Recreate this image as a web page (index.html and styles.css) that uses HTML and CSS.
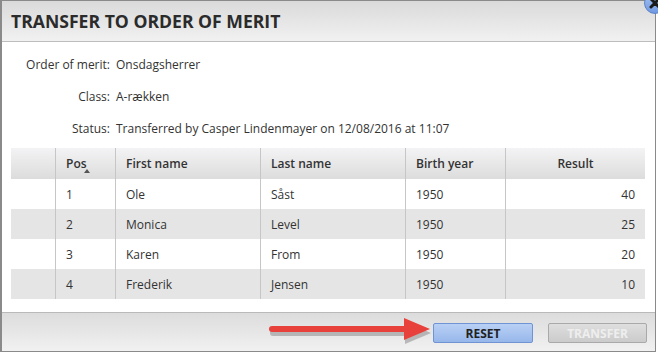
FILE: index.html
```html
<!DOCTYPE html>
<html lang="da">

<head>
    <meta charset="UTF-8">
    <meta name="viewport" content="width=device-width, initial-scale=1.0">
    <title>Transfer to order of merit</title>
    <link rel="stylesheet" href="styles.css">
</head>

<body>
    <div class="dialog">
        <div class="dialog-header">
            <h2>TRANSFER TO ORDER OF MERIT</h2>
        </div>
        <button class="close-btn" title="Close">
            <svg width="12" height="12" viewBox="0 0 12 12">
                <path d="M2 2 L10 10 M10 2 L2 10" stroke="#1a1a1a" stroke-width="3" stroke-linecap="round" />
            </svg>
        </button>

        <div class="dialog-body">
            <div class="info">
                <span class="info-label">Order of merit:</span>
                <span>Onsdagsherrer</span>
                <span class="info-label">Class:</span>
                <span>A-rækken</span>
                <span class="info-label">Status:</span>
                <span>Transferred by Casper Lindenmayer on 12/08/2016 at 11:07</span>
            </div>

            <table class="results">
                <thead>
                    <tr>
                        <th class="col-sel"></th>
                        <th class="col-pos sorted">Pos</th>
                        <th class="col-first">First name</th>
                        <th class="col-last">Last name</th>
                        <th class="col-year">Birth year</th>
                        <th class="col-result">Result</th>
                    </tr>
                </thead>
                <tbody>
                    <tr>
                        <td></td>
                        <td>1</td>
                        <td>Ole</td>
                        <td>Såst</td>
                        <td>1950</td>
                        <td class="num">40</td>
                    </tr>
                    <tr>
                        <td></td>
                        <td>2</td>
                        <td>Monica</td>
                        <td>Level</td>
                        <td>1950</td>
                        <td class="num">25</td>
                    </tr>
                    <tr>
                        <td></td>
                        <td>3</td>
                        <td>Karen</td>
                        <td>From</td>
                        <td>1950</td>
                        <td class="num">20</td>
                    </tr>
                    <tr>
                        <td></td>
                        <td>4</td>
                        <td>Frederik</td>
                        <td>Jensen</td>
                        <td>1950</td>
                        <td class="num">10</td>
                    </tr>
                </tbody>
            </table>
        </div>

        <div class="dialog-footer">
            <svg class="arrow" width="170" height="30" viewBox="0 0 170 30">
                <g transform="translate(1,2)" fill="#7a7a7a" opacity="0.45">
                    <path d="M4 14 L140 14" stroke="#7a7a7a" stroke-width="6" stroke-linecap="round" />
                    <polygon points="136,3 162,14 136,25" />
                </g>
                <path d="M4 12 L140 12" stroke="#e8413c" stroke-width="6" stroke-linecap="round" />
                <polygon points="136,1 162,12 136,23" fill="#e8413c" />
            </svg>
            <button class="btn btn-primary">RESET</button>
            <button class="btn btn-disabled" disabled>TRANSFER</button>
        </div>
    </div>
</body>

</html>
```

FILE: styles.css
```css
body {
    margin: 0;
    font-family: "Open Sans", "Liberation Sans", sans-serif;
    font-size: 12px;
    color: #333;
    background-color: #fff;
    overflow: hidden;
}

.dialog {
    position: relative;
    width: 653px;
    height: 350px;
    border: 1px solid #8a8a8a;
    border-left-width: 2px;
    background-color: #fff;
    display: flex;
    flex-direction: column;
}

.dialog-header {
    height: 40px;
    border-bottom: 1px solid #bdbdbd;
    background: linear-gradient(#dadada, #f1f1f1);
    display: flex;
    align-items: center;
    padding-left: 9px;
}

.dialog-header h2 {
    margin: 0;
    font-size: 17.6px;
    font-weight: 700;
    color: #2b2b2b;
}

.close-btn {
    position: absolute;
    top: -9px;
    right: -11px;
    width: 22px;
    height: 22px;
    padding: 0;
    border: 1px solid #5b82c9;
    border-radius: 50%;
    background: linear-gradient(#a9c6f4, #6f98e2);
    display: flex;
    align-items: center;
    justify-content: center;
}

.dialog-body {
    flex: 1;
    padding: 6px 10px 0 9px;
}

.info {
    display: grid;
    grid-template-columns: 99px auto;
    column-gap: 6px;
    grid-auto-rows: 32px;
    align-items: center;
    margin-bottom: 4px;
}

.info-label {
    text-align: right;
}

.results {
    width: 634px;
    border-collapse: collapse;
}

.results th,
.results td {
    height: 30px;
    padding: 0 10px;
    text-align: left;
    border-left: 1px solid #c6c6c6;
}

.results th:first-child,
.results td:first-child {
    border-left: none;
}

.results th {
    font-weight: 600;
    background: linear-gradient(#f3f3f5, #dcdcdc);
    height: 31px;
}

.results th.col-result {
    text-align: center;
}

.results tbody tr:nth-child(even) {
    background-color: #e5e5e5;
}

.results td.num {
    text-align: right;
}

.col-sel {
    width: 24px;
}

.col-pos {
    width: 39px;
}

.col-first {
    width: 124px;
}

.col-last {
    width: 124px;
}

.col-year {
    width: 79px;
}

.sorted {
    position: relative;
}

.sorted::after {
    content: "";
    position: absolute;
    left: 28px;
    bottom: 6px;
    border-left: 3px solid transparent;
    border-right: 3px solid transparent;
    border-bottom: 4px solid #555;
}

.dialog-footer {
    position: relative;
    height: 39px;
    border-top: 1px solid #b9b9b9;
    background: linear-gradient(#dcdcdc, #f1f1f1);
    display: flex;
    justify-content: flex-end;
    align-items: flex-start;
    gap: 15px;
    padding: 10px 8px 0 0;
    box-sizing: border-box;
}

.arrow {
    position: absolute;
    left: 266px;
    top: 4px;
}

.btn {
    height: 20px;
    width: 100px;
    padding: 0;
    border-radius: 2px;
    font-family: "Open Sans", "Liberation Sans", sans-serif;
    font-size: 12px;
    font-weight: 700;
}

.btn-primary {
    border: 1px solid #6f93d3;
    background: linear-gradient(#b9d0f5, #97b7ea);
    color: #222;
}

.btn-disabled {
    width: 99px;
    border: 1px solid #a9a9a9;
    background: linear-gradient(#dedede, #cbcbcb);
    color: #eeeeee;
}
```
